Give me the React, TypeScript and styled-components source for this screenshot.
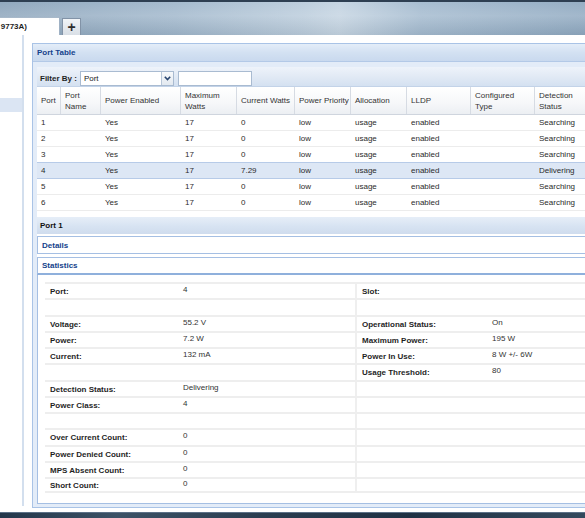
import React from "react";
import styled, { createGlobalStyle, css } from "styled-components";

const Global = createGlobalStyle`
  html, body { margin: 0; padding: 0; width: 585px; height: 518px; overflow: hidden; background: #fff; }
  body { font-family: "Liberation Sans", Arial, sans-serif; font-size: 8px; color: #2b2b2b; }
  * { box-sizing: border-box; }
`;

const Screen = styled.div`
  width: 585px;
  height: 518px;
  display: flex;
  flex-direction: column;
  overflow: hidden;
`;

const TopBar = styled.div`
  height: 35px;
  flex: none;
  display: flex;
  align-items: flex-end;
  gap: 2px;
  background:
    linear-gradient(180deg, #2e3f52 0, #2e3f52 2px, rgba(255,255,255,0) 2px),
    linear-gradient(180deg, rgba(255,255,255,0.05) 0, rgba(255,255,255,0.18) 45%, rgba(0,0,0,0.05) 100%),
    linear-gradient(90deg, #8aa3ba 0%, #9fb6cb 30%, #b9cbdb 52%, #c3d3e1 58%, #a2b9ce 72%, #8ea8c0 100%);
`;

const Tab = styled.div`
  width: 60px;
  height: 18px;
  background: #fff;
  border-top: 1px solid #a8b9ca;
  border-right: 1px solid #9fb1c4;
  display: flex;
  align-items: center;
  justify-content: flex-end;
  overflow: hidden;
  white-space: nowrap;
  padding-right: 32px;
  font-size: 8px;
  font-weight: bold;
  color: #1e1e1e;
`;

const AddTab = styled.div`
  width: 19px;
  height: 17px;
  background: linear-gradient(180deg, #f1f4f7, #d9dfe6);
  border: 1px solid #8293a7;
  border-bottom: none;
  display: flex;
  align-items: center;
  justify-content: center;
  font-size: 14px;
  font-weight: bold;
  color: #2d2d2d;
  line-height: 1;
`;

const Workspace = styled.div`
  flex: 1;
  display: flex;
  background: #fff;
  overflow: hidden;
  min-height: 0;
`;

const LeftPane = styled.div`
  width: 24px;
  flex: none;
  border-right: 2px solid #d3dfee;
  padding-top: 63px;
  margin-bottom: 6px;
`;

const NavItem = styled.div<{ $active?: boolean }>`
  height: 14px;
  ${(p) => p.$active && css`background: #dbe5f3;`}
`;

const Main = styled.div`
  width: 600px;
  flex: none;
  margin: 8px 0 4px 8px;
`;

const Frame = styled.div`
  border: 1px solid #a9c3e6;
  background: #e3ecf8;
  height: 100%;
  display: flex;
  flex-direction: column;
`;

const FrameTitle = styled.div`
  height: 18px;
  flex: none;
  display: flex;
  align-items: center;
  padding-left: 4px;
  font-weight: bold;
  color: #15428b;
  background: linear-gradient(180deg, #e4edf8 0%, #d3e1f2 50%, #c9d9ee 100%);
  border-bottom: 1px solid #b3c9e7;
`;

const FrameBody = styled.div`
  flex: 1;
  padding: 5px 3px 3px 4px;
  display: flex;
  flex-direction: column;
  min-height: 0;
`;

const Content = styled.div`
  flex: 1;
  background: #fff;
  display: flex;
  flex-direction: column;
  min-height: 0;
`;

const FilterBar = styled.div`
  height: 20px;
  flex: none;
  display: flex;
  align-items: center;
  gap: 3px;
  padding-left: 3px;
  padding-top: 3px;
  background: linear-gradient(180deg, #eef3fa 0%, #dfe8f4 60%, #d4e1f1 100%);
  border-bottom: 1px solid #c3d3e8;
`;

const FilterLabel = styled.span`
  font-weight: bold;
  color: #1f1f1f;
`;

const SelectBox = styled.div`
  width: 94px;
  height: 15px;
  display: flex;
  background: #fff;
  border: 1px solid #a9bbd1;
`;

const SelectText = styled.div`
  flex: 1;
  display: flex;
  align-items: center;
  padding-left: 3px;
  color: #222;
`;

const SelectArrow = styled.div`
  width: 12px;
  display: flex;
  align-items: center;
  justify-content: center;
  border-left: 1px solid #b7c6d8;
  background: linear-gradient(180deg, #f7f9fb, #e3e9f0);
`;

const TextInput = styled.div`
  width: 74px;
  height: 15px;
  margin-left: 1px;
  background: #fff;
  border: 1px solid #a9bbd1;
`;

const Grid = styled.div`
  flex: none;
  display: flex;
  flex-direction: column;
`;

const HeaderRow = styled.div`
  height: 28px;
  display: flex;
  background: linear-gradient(180deg, #ffffff 0%, #f6f7f9 60%, #eceff3 100%);
  border-bottom: 1px solid #cfd5de;
`;

const HeaderCell = styled.div<{ $w: number }>`
  width: ${(p) => p.$w}px;
  flex: none;
  display: flex;
  align-items: center;
  padding-left: 4px;
  line-height: 11px;
  white-space: nowrap;
  color: #333;
  border-right: 1px solid #d6dbe3;
`;

const DataRow = styled.div<{ $selected?: boolean }>`
  height: 16px;
  display: flex;
  border-bottom: 1px solid #ececec;
  ${(p) =>
    p.$selected &&
    css`
      background: #dde7f5;
      border-top: 1px solid #b7cbe8;
      border-bottom: 1px solid #b7cbe8;
      margin-top: -1px;
      height: 17px;
    `}
`;

const DataCell = styled.div<{ $w: number }>`
  width: ${(p) => p.$w}px;
  flex: none;
  display: flex;
  align-items: center;
  padding-left: 4px;
  white-space: nowrap;
  color: #2b2b2b;
`;

const Gap = styled.div<{ $h: number }>`
  height: ${(p) => p.$h}px;
  flex: none;
`;

const SectionBar = styled.div`
  height: 17px;
  flex: none;
  display: flex;
  align-items: center;
  padding-left: 3px;
  font-weight: bold;
  color: #111;
  background: linear-gradient(180deg, #e6eef8 0%, #d7e3f2 55%, #cfdcee 100%);
`;

const PanelHeader = styled.div<{ $open?: boolean }>`
  height: 18px;
  flex: none;
  display: flex;
  align-items: center;
  padding-left: 4px;
  font-weight: bold;
  color: #15428b;
  background: #fff;
  border: 1px solid #a5bfe3;
  ${(p) =>
    p.$open &&
    css`
      border-bottom: 2px solid #8fb0dc;
    `}
`;

const StatsBody = styled.div`
  flex: 1;
  border: 1px solid #a5bfe3;
  border-top: none;
  padding: 7px 0 0 7px;
  overflow: hidden;
`;

const StatRow = styled.div`
  height: 16.25px;
  display: grid;
  grid-template-columns: 135px 175px 134px 1fr;
  border-top: 2px solid #eeeeee;
  &:last-child { border-bottom: 2px solid #eeeeee; }
`;

const StatLabel = styled.div<{ $divider?: boolean }>`
  display: flex;
  align-items: center;
  padding-left: 5px;
  padding-top: 1px;
  font-weight: bold;
  color: #1f1f1f;
  white-space: nowrap;
  ${(p) => p.$divider && css`border-left: 2px solid #efefef;`}
`;

const StatValue = styled.div`
  display: flex;
  align-items: center;
  padding-left: 3px;
  padding-bottom: 3px;
  color: #333;
  white-space: nowrap;
`;

const Taskbar = styled.div`
  height: 6px;
  flex: none;
  background: linear-gradient(90deg, #23364a 0%, #3c5266 20%, #2a3d50 45%, #1f3144 70%, #34495d 100%);
  border-top: 1px solid #5c7188;
`;

const Chevron = () => (
  <svg width="7" height="5" viewBox="0 0 7 5">
    <polyline points="0.8,0.8 3.5,3.6 6.2,0.8" fill="none" stroke="#2a4670" strokeWidth="1.6" />
  </svg>
);

const columns: { label: React.ReactNode; w: number }[] = [
  { label: "Port", w: 24 },
  { label: <>Port<br />Name</>, w: 40 },
  { label: "Power Enabled", w: 80 },
  { label: <>Maximum<br />Watts</>, w: 56 },
  { label: "Current Watts", w: 58 },
  { label: "Power Priority", w: 56 },
  { label: "Allocation", w: 56 },
  { label: "LLDP", w: 64 },
  { label: <>Configured<br />Type</>, w: 64 },
  { label: <>Detection<br />Status</>, w: 70 },
];

const rows = [1, 2, 3, 4, 5, 6].map((n) => [
  String(n),
  "",
  "Yes",
  "17",
  n === 4 ? "7.29" : "0",
  "low",
  "usage",
  "enabled",
  "",
  n === 4 ? "Delivering" : "Searching",
]);

const stats: [string, string, string, string][] = [
  ["Port:", "4", "Slot:", ""],
  ["", "", "", ""],
  ["Voltage:", "55.2 V", "Operational Status:", "On"],
  ["Power:", "7.2 W", "Maximum Power:", "195 W"],
  ["Current:", "132 mA", "Power In Use:", "8 W +/- 6W"],
  ["", "", "Usage Threshold:", "80"],
  ["Detection Status:", "Delivering", "", ""],
  ["Power Class:", "4", "", ""],
  ["", "", "", ""],
  ["Over Current Count:", "0", "", ""],
  ["Power Denied Count:", "0", "", ""],
  ["MPS Absent Count:", "0", "", ""],
  ["Short Count:", "0", "", ""],
];

export default function App() {
  return (
    <Screen>
      <Global />
      <TopBar>
        <Tab>9773A)</Tab>
        <AddTab>+</AddTab>
      </TopBar>
      <Workspace>
        <LeftPane>
          <NavItem $active />
        </LeftPane>
        <Main>
          <Frame>
            <FrameTitle>Port Table</FrameTitle>
            <FrameBody>
              <Content>
                <FilterBar>
                  <FilterLabel>Filter By :</FilterLabel>
                  <SelectBox>
                    <SelectText>Port</SelectText>
                    <SelectArrow>
                      <Chevron />
                    </SelectArrow>
                  </SelectBox>
                  <TextInput />
                </FilterBar>
                <Grid>
                  <HeaderRow>
                    {columns.map((c, i) => (
                      <HeaderCell key={i} $w={c.w}>
                        <span>{c.label}</span>
                      </HeaderCell>
                    ))}
                  </HeaderRow>
                  {rows.map((r, ri) => (
                    <DataRow key={ri} $selected={ri === 3}>
                      {r.map((v, ci) => (
                        <DataCell key={ci} $w={columns[ci].w}>
                          {v}
                        </DataCell>
                      ))}
                    </DataRow>
                  ))}
                </Grid>
                <Gap $h={6} />
                <SectionBar>Port 1</SectionBar>
                <Gap $h={2} />
                <PanelHeader>Details</PanelHeader>
                <Gap $h={3} />
                <PanelHeader $open>Statistics</PanelHeader>
                <StatsBody>
                  {stats.map((s, i) => (
                    <StatRow key={i}>
                      <StatLabel>{s[0]}</StatLabel>
                      <StatValue>{s[1]}</StatValue>
                      <StatLabel $divider>{s[2]}</StatLabel>
                      <StatValue>{s[3]}</StatValue>
                    </StatRow>
                  ))}
                </StatsBody>
              </Content>
            </FrameBody>
          </Frame>
        </Main>
      </Workspace>
      <Taskbar />
    </Screen>
  );
}
